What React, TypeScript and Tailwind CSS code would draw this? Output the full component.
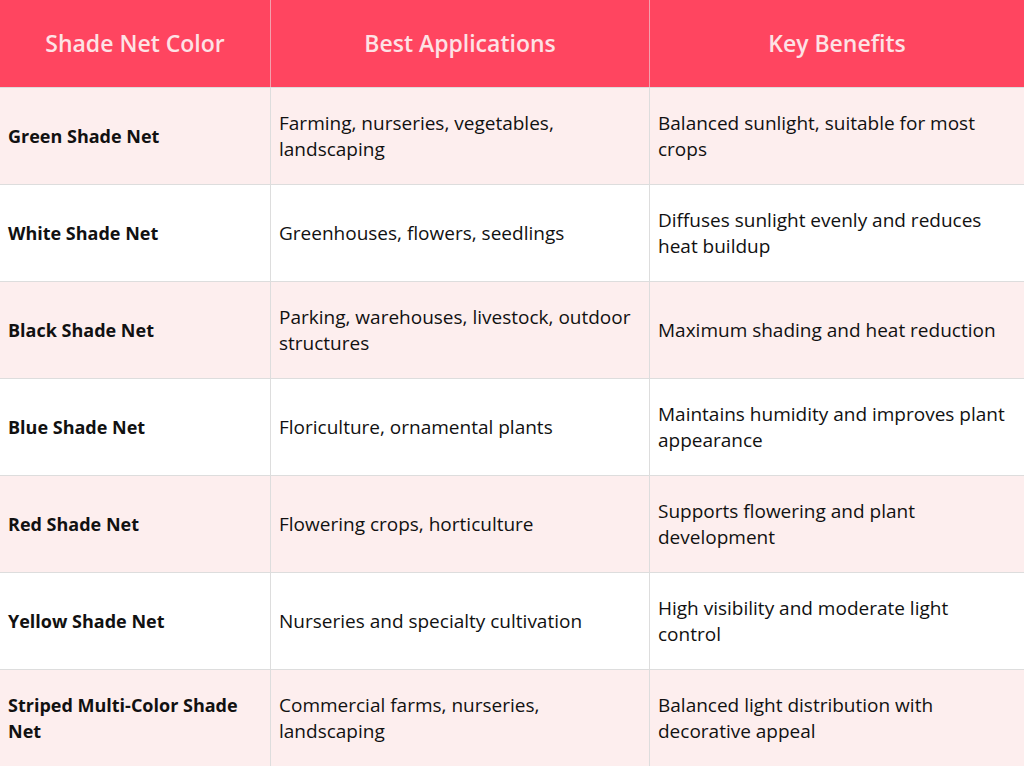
const rows = [
  ['Green Shade Net', 'Farming, nurseries, vegetables, landscaping', 'Balanced sunlight, suitable for most crops'],
  ['White Shade Net', 'Greenhouses, flowers, seedlings', 'Diffuses sunlight evenly and reduces heat buildup'],
  ['Black Shade Net', 'Parking, warehouses, livestock, outdoor structures', 'Maximum shading and heat reduction'],
  ['Blue Shade Net', 'Floriculture, ornamental plants', 'Maintains humidity and improves plant appearance'],
  ['Red Shade Net', 'Flowering crops, horticulture', 'Supports flowering and plant development'],
  ['Yellow Shade Net', 'Nurseries and specialty cultivation', 'High visibility and moderate light control'],
  ['Striped Multi-Color Shade Net', 'Commercial farms, nurseries, landscaping', 'Balanced light distribution with decorative appeal'],
];

export default function App() {
  return (
    <main className="w-[1024px] h-[768px] bg-white overflow-hidden font-['Open_Sans',sans-serif] text-[#111]">
      <div className="grid grid-cols-[271px_379px_374px] h-[87px] bg-[#ff4560] text-[#fde2e5] text-[23px] font-semibold">
        <div className="flex items-center justify-center border-r border-[#f3a0ac]">Shade Net Color</div>
        <div className="flex items-center justify-center border-r border-[#f3a0ac]">Best Applications</div>
        <div className="flex items-center justify-center">Key Benefits</div>
      </div>
      {rows.map((r, i) => (
        <div
          key={r[0]}
          className={`grid grid-cols-[271px_379px_374px] h-[97px] border-t border-[#dddddd] text-[19px] leading-[26px] ${i % 2 === 0 ? 'bg-[#fdeeee]' : 'bg-white'}`}
        >
          <div className="flex items-center pl-2 pr-3 text-[18px] font-bold border-r border-[#dddddd]">{r[0]}</div>
          <div className="flex items-center pl-2 pr-4 border-r border-[#dddddd]">{r[1]}</div>
          <div className="flex items-center pl-2 pr-4">{r[2]}</div>
        </div>
      ))}
    </main>
  );
}
